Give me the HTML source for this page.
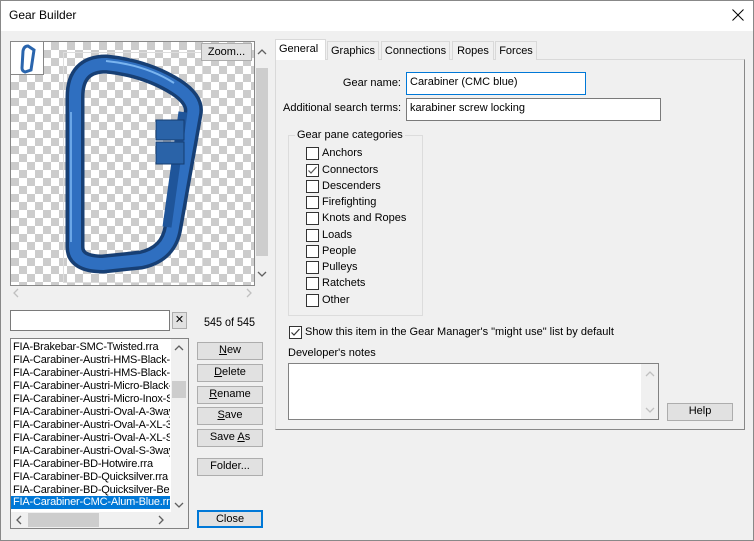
<!DOCTYPE html>
<html><head><style>
*{box-sizing:border-box;margin:0;padding:0}
body{width:754px;height:541px;overflow:hidden;background:#f0f0f0;font-family:"Liberation Sans",sans-serif;font-size:11px;color:#000;position:relative}
.a{position:absolute}
.win{left:0;top:0;width:754px;height:541px;border:1px solid #888}
.title{left:1px;top:1px;width:752px;height:30px;background:#fff}
.btn{position:absolute;background:#e1e1e1;border:1px solid #adadad;text-align:center;line-height:15px;font-size:11px}
.in{position:absolute;background:#fff;border:1px solid #7a7a7a;padding:3px 3px;font-size:11px}
.cb{position:absolute;width:13px;height:13px;border:1px solid #333;background:#fff}
.lbl{position:absolute;font-size:11px;white-space:nowrap}
.tab{position:absolute;top:41px;height:19px;border:1px solid #d9d9d9;border-bottom:none;background:#f0f0f0;text-align:center;line-height:18px}
.li{position:absolute;left:13px;white-space:nowrap;width:157px;overflow:hidden;height:13px;line-height:13px;letter-spacing:-0.2px}
</style></head><body>
<div class="a win"></div>
<div class="a title"></div>
<div class="lbl" style="left:9px;top:8px;font-size:12px">Gear Builder</div>
<svg class="a" style="left:732px;top:9px" width="12" height="12"><path d="M0.5 0.5L11.5 11.5M11.5 0.5L0.5 11.5" stroke="#000" stroke-width="1"/></svg>

<!-- image area -->
<div class="a" style="left:10px;top:41px;width:245px;height:245px;border:1px solid #888;overflow:hidden;
background-color:#fff;background-image:linear-gradient(45deg,#ccc 25%,transparent 25%,transparent 75%,#ccc 75%),linear-gradient(45deg,#ccc 25%,transparent 25%,transparent 75%,#ccc 75%);background-size:16px 16px;background-position:0 0,8px 8px">
<div class="a" style="left:52px;top:10px;width:140px;height:231px;border:1px solid #ddd"></div>
<svg class="a" style="left:0;top:0" width="245" height="245">
<path d="M64 205 L64 55 Q64 22 95 22 Q135 26 165 45 Q185 58 182 72 L162 185 Q158 212 130 218 L92 222 Q64 222 64 205 Z" fill="none" stroke="#173f74" stroke-width="19" stroke-linejoin="round"/>
<path d="M64 205 L64 55 Q64 22 95 22 Q135 26 165 45 Q185 58 182 72 L162 185 Q158 212 130 218 L92 222 Q64 222 64 205 Z" fill="none" stroke="#2f6fc0" stroke-width="12" stroke-linejoin="round"/>
<path d="M60 70 L60 200" stroke="#6aa6e6" stroke-width="2" fill="none"/>
<path d="M95 19 Q135 23 163 41" stroke="#7ab4ef" stroke-width="2" fill="none"/>
<rect x="144" y="80" width="0" height="0"/>
<path d="M172 70 L156 185" stroke="#1f559a" stroke-width="9"/>
<rect x="145" y="78" width="28" height="20" fill="#2a63a8" stroke="#143c70"/>
<rect x="145" y="100" width="28" height="22" fill="#2a63a8" stroke="#143c70"/>
</svg>
<div class="a" style="left:0;top:0;width:33px;height:33px;background:#fff;border-right:1px solid #888;border-bottom:1px solid #888"></div>
<svg class="a" style="left:5px;top:1px" width="24" height="32"><path d="M7 8 Q8 3 12 3 L18 7 L15 27 L9 29 Q6 28 6 25 Z" fill="none" stroke="#2a65ad" stroke-width="3"/></svg>
<div class="btn" style="left:190px;top:1px;width:51px;height:18px;line-height:16px">Zoom...</div>
</div>
<div class="a" style="left:255px;top:41px;width:14px;height:245px;background:#f0f0f0"></div>
<div class="a" style="left:256px;top:68px;width:12px;height:188px;background:#cdcdcd"></div>
<svg class="a" style="left:257px;top:48px" width="10" height="230"><path d="M1 6L5 2L9 6M1 224L5 228L9 224" fill="none" stroke="#606060" stroke-width="1.3"/></svg>
<svg class="a" style="left:12px;top:288px" width="245" height="10"><path d="M6 1L2 5L6 9M235 1L239 5L235 9" fill="none" stroke="#c0c0c0" stroke-width="1.3"/></svg>

<!-- search -->
<div class="in" style="left:10px;top:310px;width:160px;height:21px"></div>
<div class="btn" style="left:172px;top:312px;width:15px;height:17px;line-height:15px">✕</div>
<div class="lbl" style="left:204px;top:315px;font-size:12px;transform:scaleX(.9);transform-origin:left">545 of 545</div>

<!-- list -->
<div class="a" style="left:10px;top:338px;width:179px;height:191px;background:#fff;border:1px solid #828282"></div>
<div class="li" style="top:341px">FIA-Brakebar-SMC-Twisted.rra</div>
<div class="li" style="top:354px">FIA-Carabiner-Austri-HMS-Black-2</div>
<div class="li" style="top:367px">FIA-Carabiner-Austri-HMS-Black-S</div>
<div class="li" style="top:380px">FIA-Carabiner-Austri-Micro-Black-S</div>
<div class="li" style="top:393px">FIA-Carabiner-Austri-Micro-Inox-Sc</div>
<div class="li" style="top:406px">FIA-Carabiner-Austri-Oval-A-3way</div>
<div class="li" style="top:419px">FIA-Carabiner-Austri-Oval-A-XL-3w</div>
<div class="li" style="top:432px">FIA-Carabiner-Austri-Oval-A-XL-Sc</div>
<div class="li" style="top:445px">FIA-Carabiner-Austri-Oval-S-3way</div>
<div class="li" style="top:458px">FIA-Carabiner-BD-Hotwire.rra</div>
<div class="li" style="top:471px">FIA-Carabiner-BD-Quicksilver.rra</div>
<div class="li" style="top:484px">FIA-Carabiner-BD-Quicksilver-Ben</div>
<div class="li" style="top:496px;left:11px;width:159px;padding-left:2px;background:#0078d7;color:#fff">FIA-Carabiner-CMC-Alum-Blue.rra</div>
<div class="a" style="left:171px;top:339px;width:17px;height:173px;background:#f0f0f0"></div>
<div class="a" style="left:172px;top:381px;width:14px;height:17px;background:#cdcdcd"></div>
<svg class="a" style="left:174px;top:344px" width="10" height="165"><path d="M1 6L5 2L9 6M1 159L5 163L9 159" fill="none" stroke="#606060" stroke-width="1.3"/></svg>
<div class="a" style="left:11px;top:512px;width:177px;height:16px;background:#f0f0f0"></div>
<div class="a" style="left:28px;top:513px;width:71px;height:14px;background:#cdcdcd"></div>
<svg class="a" style="left:16px;top:515px" width="150" height="10"><path d="M5 1L1 5L5 9M143 1L147 5L143 9" fill="none" stroke="#606060" stroke-width="1.3"/></svg>

<div class="btn" style="left:197px;top:342px;width:66px;height:18px"><u>N</u>ew</div>
<div class="btn" style="left:197px;top:364px;width:66px;height:18px"><u>D</u>elete</div>
<div class="btn" style="left:197px;top:386px;width:66px;height:18px"><u>R</u>ename</div>
<div class="btn" style="left:197px;top:407px;width:66px;height:18px"><u>S</u>ave</div>
<div class="btn" style="left:197px;top:429px;width:66px;height:18px">Save <u>A</u>s</div>
<div class="btn" style="left:197px;top:458px;width:66px;height:18px">Folder...</div>
<div class="btn" style="left:197px;top:510px;width:66px;height:18px;border:2px solid #0078d7;line-height:14px">Close</div>

<!-- tabs -->
<div class="a" style="left:275px;top:59px;width:470px;height:371px;border:1px solid #d9d9d9;border-right-color:#888;border-bottom-color:#888;background:#f0f0f0"></div>
<div class="tab" style="left:327px;width:52px">Graphics</div>
<div class="tab" style="left:381px;width:69px">Connections</div>
<div class="tab" style="left:452px;width:42px">Ropes</div>
<div class="tab" style="left:495px;width:42px">Forces</div>
<div class="tab" style="left:275px;top:39px;width:51px;height:21px;background:#fff;border-color:#d9d9d9;text-align:left;padding-left:3px">General</div>

<div class="lbl" style="left:401px;top:77px;transform:translateX(-100%)">Gear name:</div>
<div class="in" style="left:406px;top:72px;width:180px;height:23px;border-color:#0078d7">Carabiner (CMC blue)</div>
<div class="lbl" style="left:401px;top:102px;transform:translateX(-100%)">Additional search terms:</div>
<div class="in" style="left:406px;top:98px;width:255px;height:23px">karabiner screw locking</div>

<div class="a" style="left:288px;top:135px;width:135px;height:181px;border:1px solid #dcdcdc"></div>
<div class="lbl" style="left:295px;top:129px;background:#f0f0f0;padding:0 2px">Gear pane categories</div>
<div class="cb" style="left:306px;top:147px"></div><div class="lbl" style="left:322px;top:147px">Anchors</div>
<div class="cb" style="left:306px;top:164px"></div><svg class="a" style="left:306px;top:164px" width="13" height="13"><path d="M2.5 6.5L5 9L10.5 3" fill="none" stroke="#555" stroke-width="1.2"/></svg><div class="lbl" style="left:322px;top:164px">Connectors</div>
<div class="cb" style="left:306px;top:180px"></div><div class="lbl" style="left:322px;top:180px">Descenders</div>
<div class="cb" style="left:306px;top:196px"></div><div class="lbl" style="left:322px;top:196px">Firefighting</div>
<div class="cb" style="left:306px;top:212px"></div><div class="lbl" style="left:322px;top:212px">Knots and Ropes</div>
<div class="cb" style="left:306px;top:229px"></div><div class="lbl" style="left:322px;top:229px">Loads</div>
<div class="cb" style="left:306px;top:245px"></div><div class="lbl" style="left:322px;top:245px">People</div>
<div class="cb" style="left:306px;top:261px"></div><div class="lbl" style="left:322px;top:261px">Pulleys</div>
<div class="cb" style="left:306px;top:277px"></div><div class="lbl" style="left:322px;top:277px">Ratchets</div>
<div class="cb" style="left:306px;top:294px"></div><div class="lbl" style="left:322px;top:294px">Other</div>

<div class="cb" style="left:289px;top:326px"></div><svg class="a" style="left:289px;top:326px" width="13" height="13"><path d="M2.5 6.5L5 9L10.5 3" fill="none" stroke="#333" stroke-width="1.2"/></svg>
<div class="lbl" style="left:305px;top:326px">Show this item in the Gear Manager's "might use" list by default</div>
<div class="lbl" style="left:288px;top:347px">Developer's notes</div>
<div class="a" style="left:288px;top:363px;width:371px;height:57px;background:#fff;border:1px solid #828282"></div>
<div class="a" style="left:641px;top:364px;width:17px;height:55px;background:#f0f0f0"></div>
<svg class="a" style="left:645px;top:370px" width="10" height="44"><path d="M1 6L5 2L9 6M1 38L5 42L9 38" fill="none" stroke="#c0c0c0" stroke-width="1.3"/></svg>
<div class="btn" style="left:667px;top:403px;width:66px;height:18px">Help</div>
</body></html>
